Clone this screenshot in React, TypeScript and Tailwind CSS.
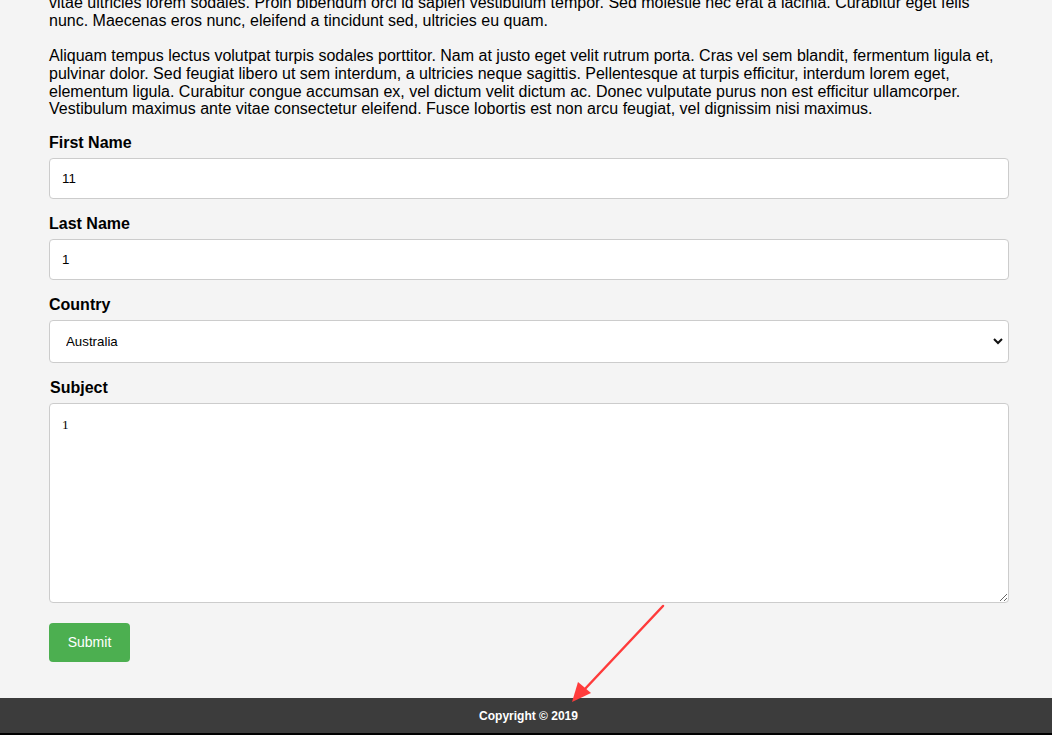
export default function App() {
  return (
    <div className="relative min-h-[735px] bg-[#f4f4f4] font-['Liberation_Sans',Arial,sans-serif] text-black flex flex-col">
      <main className="flex-1 px-[49px] pr-[43px] text-[16px] leading-[17.7px] mt-[-6px]">
        <p>
          vitae ultricies lorem sodales. Proin bibendum orci id sapien vestibulum tempor. Sed molestie nec erat a lacinia. Curabitur eget felis nunc. Maecenas eros nunc, eleifend a tincidunt sed, ultricies eu quam.
        </p>
        <p className="mt-[17.7px]">
          Aliquam tempus lectus volutpat turpis sodales porttitor. Nam at justo eget velit rutrum porta. Cras vel sem blandit, fermentum ligula et, pulvinar dolor. Sed feugiat libero ut sem interdum, a ultricies neque sagittis. Pellentesque at turpis efficitur, interdum lorem eget, elementum ligula. Curabitur congue accumsan ex, vel dictum velit dictum ac. Donec vulputate purus non est efficitur ullamcorper. Vestibulum maximus ante vitae consectetur eleifend. Fusce lobortis est non arcu feugiat, vel dignissim nisi maximus.
        </p>

        <form className="w-[960px] mt-[16px]" onSubmit={(e) => e.preventDefault()}>
          <label className="block font-bold text-[16px] leading-[18px]">First Name</label>
          <input
            defaultValue="11"
            className="mt-[6px] block w-full h-[41px] rounded-[4px] border border-[#ccc] bg-white px-[12px] text-[13.3px] outline-none"
          />
          <label className="block mt-[16px] font-bold text-[16px] leading-[18px]">Last Name</label>
          <input
            defaultValue="1"
            className="mt-[6px] block w-full h-[41px] rounded-[4px] border border-[#ccc] bg-white px-[12px] text-[13.3px] outline-none"
          />
          <label className="block mt-[16px] font-bold text-[16px] leading-[18px]">Country</label>
          <div className="relative mt-[6px]">
            <select
              defaultValue="australia"
              className="block w-full h-[43px] appearance-none rounded-[4px] border border-[#ccc] bg-white pl-[16px] text-[13.3px] outline-none"
            >
              <option value="australia">Australia</option>
              <option value="canada">Canada</option>
              <option value="usa">USA</option>
            </select>
            <svg className="pointer-events-none absolute right-[6px] top-[17px]" width="10" height="8" viewBox="0 0 10 8">
              <path d="M1 2 L5 6 L9 2" stroke="#111" strokeWidth="2" fill="none" />
            </svg>
          </div>
          <label className="block mt-[16px] ml-[1px] font-bold text-[16px] leading-[18px]">Subject</label>
          <textarea
            defaultValue="1"
            className="mt-[6px] block w-full h-[200px] rounded-[4px] border border-[#ccc] bg-white px-[12px] py-[12px] text-[13.3px] font-['Liberation_Serif',serif] outline-none resize-y"
          />
          <button
            type="submit"
            className="mt-[20px] w-[81px] h-[39px] rounded-[4px] bg-[#4caf50] text-white text-[14px] font-normal"
          >
            Submit
          </button>
        </form>
      </main>

      <footer className="mt-[36px] h-[37px] bg-[#3c3c3c] border-b-[2px] border-black flex items-center justify-center text-white text-[12px] font-bold">
        <span className="ml-[5px]">Copyright © 2019</span>
      </footer>

      <svg className="pointer-events-none absolute left-0 top-0" width="1052" height="735">
        <path d="M663 606 L584 690" stroke="#ff3b3b" strokeWidth="2.5" strokeLinecap="round" />
        <path d="M572 702 L578 682 L591 693 Z" fill="#ff3b3b" />
      </svg>
    </div>
  );
}
